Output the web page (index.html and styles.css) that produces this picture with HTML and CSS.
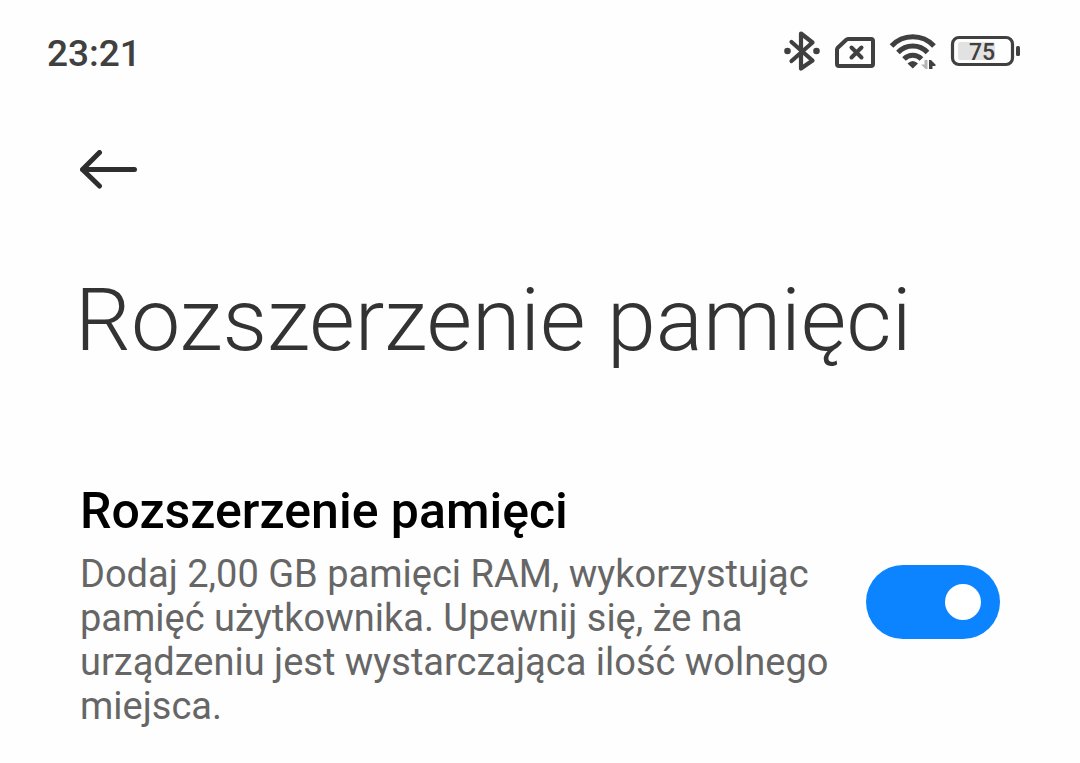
FILE: index.html
```html
<!DOCTYPE html>
<html lang="pl">
<head>
<meta charset="utf-8">
<meta name="viewport" content="width=device-width, initial-scale=1">
<title>Rozszerzenie pamięci</title>
<link rel="stylesheet" href="styles.css">
</head>
<body>
<div class="status">
  <time class="clock">23:21</time>
  <div class="status-icons">
    <svg width="40" height="48" viewBox="0 0 40 48" fill="none" stroke="currentColor" stroke-width="4.200" stroke-linejoin="round" stroke-linecap="round" aria-hidden="true">
      <path d="M9.500 12 30.500 30.500 19 38.500V3.500L30.500 12.500 9.500 31"/>
      <circle cx="5.500" cy="21" r="3.300" fill="currentColor" stroke="none"/>
      <circle cx="34.500" cy="21" r="3.300" fill="currentColor" stroke="none"/>
    </svg>
    <svg width="40" height="48" viewBox="0 0 40 48" fill="none" stroke="currentColor" stroke-width="4" stroke-linecap="round" stroke-linejoin="round" aria-hidden="true">
      <path d="M13 9H36Q38 9 38 11V34Q38 36 36 36H4Q2 36 2 34V19.500Q2 18.500 3 17.500L11 10Q12 9 13 9Z"/>
      <path d="M16.500 17.500l10 10M26.500 17.500l-10 10"/>
    </svg>
    <svg width="49" height="48" viewBox="-1 0 49 48" fill="none" stroke="currentColor" stroke-width="5" aria-hidden="true">
      <path d="M2.500 16A29 29 0 0 1 45 16"/>
      <path d="M9 22.500A20 20 0 0 1 38.500 22.500"/>
      <path d="M15 29A12 12 0 0 1 32.500 29"/>
      <path d="M23.800 38.500 18.500 33.500Q23.800 28.500 29 33.500Z" fill="currentColor" stroke="none"/>
      <path d="M38.500 30V39H36.500L32 34.500H35.500V30Z" fill="#b5b5b5" stroke="none"/>
      <path d="M40 39V30H42L46.500 34.500V36H43.500V39Z" fill="currentColor" stroke="none"/>
    </svg>
    <svg class="battery" width="71" height="48" viewBox="0 0 71 48" role="img" aria-label="75%">
      <rect x="8" y="12" width="37" height="18" rx="2" fill="#e2e2e2"/>
      <rect x="2.500" y="7.500" width="60" height="27" rx="6.500" fill="none" stroke="currentColor" stroke-width="3.200"/>
      <rect x="66" y="16" width="4" height="10" rx="1.500" fill="currentColor"/>
      <text x="32" y="30" text-anchor="middle" fill="currentColor">75</text>
    </svg>
  </div>
</div>
<header class="top">
  <button class="back" type="button" aria-label="Wstecz">
    <svg width="58" height="40" viewBox="0 0 58 40" fill="none" stroke="currentColor" stroke-width="5" stroke-linecap="round" stroke-linejoin="round" aria-hidden="true">
      <path d="M54.500 19.500H2.500M19.500 2.500 2.500 19.500 19.500 36"/>
    </svg>
  </button>
  <h1 class="heading">Rozszerzenie pamięci</h1>
</header>
<main class="setting">
  <div class="setting-text">
    <label class="setting-title" for="memory">Rozszerzenie pamięci</label>
    <p class="setting-note" id="memory-note">Dodaj 2,00 GB pamięci RAM, wykorzystując pamięć użytkownika. Upewnij się, że na urządzeniu jest wystarczająca ilość wolnego miejsca.</p>
  </div>
  <input class="switch" type="checkbox" role="switch" id="memory" aria-describedby="memory-note" checked>
</main>
</body>
</html>
```
FILE: styles.css
```css
* {
  box-sizing: border-box;
}

body {
  margin: 0;
  background: #fefefe;
  color: #333;
  font-family: Roboto, "Noto Sans", sans-serif;
}

.status {
  display: flex;
  justify-content: space-between;
  padding: 30px 59px 0 47px;
  color: #404040;
}

.clock {
  font-size: 37px;
  font-weight: 500;
  line-height: 48px;
}

.status-icons {
  display: flex;
  gap: 13px;
}

.battery {
  font-size: 23px;
  font-weight: 500;
}

.top {
  padding: 72px 75px 0;
}

.back {
  display: block;
  margin: 0 5px;
  padding: 0;
  border: 0;
  background: none;
  color: #2e2e2e;
  cursor: pointer;
}

.back svg {
  display: block;
}

.heading {
  margin: 78px 0 0;
  font-size: 88px;
  font-weight: 300;
  line-height: 104px;
}

.setting {
  display: flex;
  align-items: center;
  gap: 32px;
  padding: 104px 80px 32px;
}

.setting-text {
  flex: 1;
}

.setting-title {
  display: block;
  color: #000;
  font-size: 50px;
  font-weight: 500;
  line-height: 70px;
}

.setting-note {
  margin: 6px 0 0;
  color: #666;
  font-size: 38px;
  line-height: 44px;
}

.switch {
  appearance: none;
  display: flex;
  align-items: center;
  justify-content: flex-end;
  flex: none;
  width: 134px;
  height: 74px;
  margin: 0;
  padding: 0 19px;
  border-radius: 37px;
  background: #bbb;
  cursor: pointer;
}

.switch::before {
  content: "";
  width: 36px;
  height: 36px;
  border-radius: 50%;
  background: #fff;
}

.switch:checked {
  background: #0d84ff;
}

.switch:not(:checked) {
  justify-content: flex-start;
}
```
